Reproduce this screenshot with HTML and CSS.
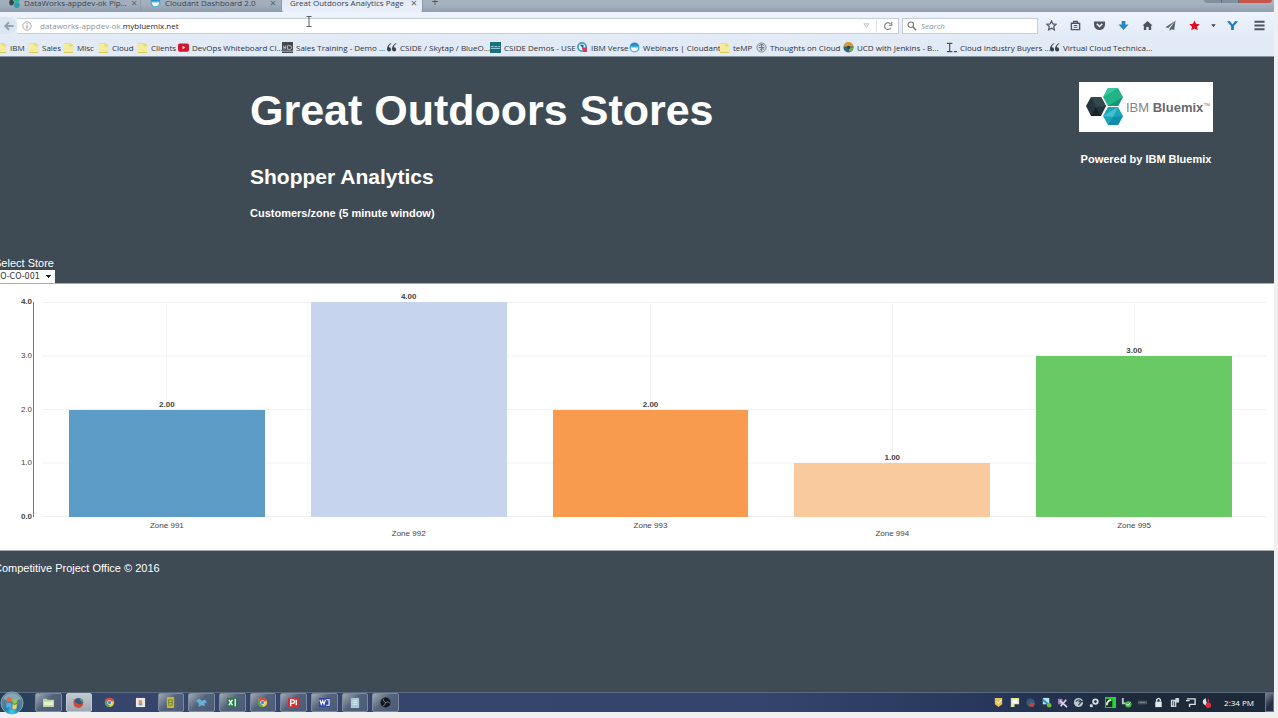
FILE: index.html
```html
<!DOCTYPE html>
<html lang="en">
<head>
<meta charset="utf-8">
<title>Great Outdoors Analytics Page</title>
<link rel="stylesheet" href="styles.css">
</head>
<body>
<svg class="defs" aria-hidden="true">
  <symbol id="folder" viewBox="0 0 12 12"><path d="M1 1h7l3 2v9H1z" fill="#e9dc74"/><path d="M1 2h6v3h4v6H1z" fill="#f3ec9b"/><path d="M1 11.500h10" stroke="#d6c45c"/></symbol>
  <symbol id="quotes" viewBox="0 0 12 12"><path d="M5.500 1C2.500 2.500 1 5 1 8a2.300 2.300 0 1 0 2-2.300C3.300 4 4 2.800 5.800 1.800zM11 1C8 2.500 6.500 5 6.500 8a2.300 2.300 0 1 0 2-2.300c.3-1.700 1-2.900 2.800-3.900z" fill="#3b444d"/></symbol>
  <symbol id="cloudant" viewBox="0 0 12 12"><circle cx="6" cy="6" r="5.500" fill="#42b4dc"/><path d="M2 6h8a4 4 0 0 1-8 0z" fill="#fff"/><path d="M1 4a5.500 5.500 0 0 1 10 0z" fill="#2f86c4"/></symbol>
  <symbol id="chrome" viewBox="0 0 12 12"><circle cx="6" cy="6" r="5" fill="#e9c93f"/><path d="M6 6 1.500 3.800A5 5 0 0 1 10.700 4z" fill="#dd4a3c"/><path d="M6 6 1.500 3.800A5 5 0 0 0 6 11z" fill="#42a55a"/><circle cx="6" cy="6" r="2.400" fill="#fff"/><circle cx="6" cy="6" r="1.800" fill="#4a86d8"/></symbol>
</svg>
<div class="screen">
  <header class="browser">
    <div class="tabs">
      <div class="tab"><svg class="ico" viewBox="0 0 12 12"><path d="M7 0h4l1 3-2 3H7L5 3z" fill="#28b58a"/><path d="M7 6h4l1 3-2 3H7L5 9z" fill="#22a3b5"/><path d="M1 3h3l2 3-2 3H1L0 6z" fill="#34454c"/></svg><span class="tab-title">DataWorks-appdev-ok Pip...</span><button class="close" aria-label="Close tab">×</button></div>
      <div class="tab"><svg class="ico"><use href="#cloudant"/></svg><span class="tab-title">Cloudant Dashboard 2.0</span><button class="close" aria-label="Close tab">×</button></div>
      <div class="tab active"><span class="tab-title">Great Outdoors Analytics Page</span><button class="close" aria-label="Close tab">×</button></div>
      <button class="newtab" aria-label="New tab">+</button>
      <div class="winbtns"><button aria-label="Minimize"></button><button aria-label="Maximize"></button><button class="red" aria-label="Close"></button></div>
    </div>
    <div class="toolbar">
      <button class="back" aria-label="Back"><svg viewBox="0 0 16 16"><path d="M8 3 3 8l5 5M3.500 8H14" fill="none" stroke="#93a2b0" stroke-width="2.500"/></svg></button>
      <div class="url">
        <svg class="info" viewBox="0 0 12 12"><circle cx="6" cy="6" r="5" fill="none" stroke="#999"/><path d="M6 5v4M6 2.800v1.200" stroke="#888" stroke-width="1.200"/></svg>
        <a class="address" href="#">dataworks-appdev-ok.<b>mybluemix.net</b></a>
        <svg class="drop" viewBox="0 0 8 8"><path d="M1 2h6L4 6.500z" fill="#eee" stroke="#aaa" stroke-width=".7"/></svg>
        <button class="reload" aria-label="Reload"><svg viewBox="0 0 12 12"><path d="M9.500 8A4 4 0 1 1 9 3.500M10.500 1v4H7" fill="none" stroke="#777" stroke-width="1.300"/></svg></button>
      </div>
      <label class="search"><svg viewBox="0 0 12 12"><circle cx="4.500" cy="4.500" r="3.300" fill="none" stroke="#777" stroke-width="1.300"/><path d="m7 7 4 4" stroke="#777" stroke-width="1.800"/></svg><input type="text" placeholder="Search" aria-label="Search"></label>
      <div class="tools">
        <button aria-label="Bookmark"><svg viewBox="0 0 12 12"><path d="m6 1 1.500 3.300 3.600.4-2.700 2.400.8 3.600L6 8.900l-3.200 1.800.8-3.600L.9 4.700l3.600-.4z" fill="none" stroke="#4c5560" stroke-width="1.300"/></svg></button>
        <button aria-label="Bookmarks menu"><svg viewBox="0 0 12 12"><path d="M1.500 3.500h9v7h-9zM4 3V1.500h4V3" fill="none" stroke="#4c5560" stroke-width="1.500"/><path d="M4 6h4M4 8h4" stroke="#4c5560"/></svg></button>
        <button aria-label="Pocket"><svg viewBox="0 0 12 12"><path d="M0 1.500h12V5A6 6 0 0 1 0 5z" fill="#4c5560"/><path d="m3 4 3 3 3-3" fill="none" stroke="#fff" stroke-width="1.500"/></svg></button>
        <button aria-label="Downloads"><svg viewBox="0 0 12 12"><path d="M4 1h4v4h3.500L6 11 .5 5H4z" fill="#2487bd"/></svg></button>
        <button aria-label="Home"><svg viewBox="0 0 12 12"><path d="m6 1 5.500 5H10v5H7.300V7.500H4.700V11H2V6H.5z" fill="#4c5560"/></svg></button>
        <button aria-label="Send"><svg viewBox="0 0 12 12"><path d="M11.500.5.5 8l3 .8zM11.500.500 5 9.500V12l2-2 3 1z" fill="#59636d"/></svg></button>
        <button aria-label="Favorite"><svg viewBox="0 0 12 12"><path d="m6 .5 1.700 3.700 4 .4-3 2.700.9 4L6 9.300l-3.600 2 .9-4-3-2.700 4-.4z" fill="#e40b20"/></svg></button>
        <button class="thin" aria-label="More"><svg viewBox="0 0 12 12"><path d="M2 4h8L6 9z" fill="#3f4852"/></svg></button>
        <button aria-label="Add-on"><svg viewBox="0 0 12 12"><path d="M0 1.500 3 1l3 4 3-4 3 .5-4.500 5V11h-3V6.500z" fill="#2478ba"/></svg></button>
        <button class="menu" aria-label="Menu"><svg viewBox="0 0 12 12"><path d="M.5 2h11M.5 6h11M.5 10h11" stroke="#4c5560" stroke-width="2.200"/></svg></button>
      </div>
    </div>
    <nav class="bookmarks" aria-label="Bookmarks">
      <a href="#"><svg class="ico"><use href="#folder"/></svg>IBM</a>
      <a href="#"><svg class="ico"><use href="#folder"/></svg>Sales</a>
      <a href="#"><svg class="ico"><use href="#folder"/></svg>Misc</a>
      <a href="#"><svg class="ico"><use href="#folder"/></svg>Cloud</a>
      <a href="#"><svg class="ico"><use href="#folder"/></svg>Clients</a>
      <a href="#"><svg class="ico" viewBox="0 0 12 12"><rect y="1.500" width="12" height="9" rx="2" fill="#d5152b"/><path d="M5 4v4l3-2z" fill="#fff"/></svg>DevOps Whiteboard Cl...</a>
      <a href="#"><svg class="ico" viewBox="0 0 12 12"><rect width="12" height="12" fill="#47474f"/><path d="M2 4v4M4 4v4M2 6h2M6 4v4h2.500a2 2 0 0 0 0-4zM0 10h12" fill="none" stroke="#ccd" stroke-width=".9"/></svg>Sales Training - Demo ...</a>
      <a href="#"><svg class="ico"><use href="#quotes"/></svg>CSIDE / Skytap / BlueO...</a>
      <a href="#"><svg class="ico" viewBox="0 0 12 12"><rect width="12" height="12" fill="#1b6f7f"/><path d="M1 5h3M5 5h3M9 5h2M1 7h10" stroke="#a9dbe2"/></svg>CSIDE Demos - USE</a>
      <a href="#"><svg class="ico" viewBox="0 0 12 12"><circle cx="5.500" cy="5.500" r="4.500" fill="#dff" stroke="#3f9fc6" stroke-width="2"/><path d="M5 6h6v5H7z" fill="#d83a62"/><path d="M3 3h4v4z" fill="#37479c"/></svg>IBM Verse</a>
      <a href="#"><svg class="ico"><use href="#cloudant"/></svg>Webinars | Cloudant</a>
      <a href="#"><svg class="ico"><use href="#folder"/></svg>teMP</a>
      <a href="#"><svg class="ico" viewBox="0 0 12 12"><circle cx="6" cy="6" r="5" fill="#d8dee3" stroke="#808a92"/><path d="M3 4q3-3 6 0M3 6h6M6 2v8M4 9q3-3 5-1" fill="none" stroke="#68727a"/></svg>Thoughts on Cloud</a>
      <a href="#"><svg class="ico" viewBox="0 0 12 12"><circle cx="6" cy="6" r="5.500" fill="#2e6b78"/><path d="M1 5a5 5 0 0 1 10 0z" fill="#d79b32"/><path d="M6 6h5a5 5 0 0 1-4 5z" fill="#6fb04b"/><circle cx="6" cy="6" r="1.800" fill="#314050"/></svg>UCD with Jenkins - B...</a>
      <a href="#"><svg class="ico" viewBox="0 0 12 12"><path d="M1 1.500h6M4 1v10M1 10.500h6M8.500 10.500H12" stroke="#4b545d" stroke-width="1.300"/></svg>Cloud Industry Buyers ...</a>
      <a href="#"><svg class="ico"><use href="#quotes"/></svg>Virtual Cloud Technica...</a>
    </nav>
  </header>
  <svg class="caret" viewBox="0 0 8 12" aria-hidden="true"><path d="M1.500 1H6.500M4 1v10M1.500 11H6.500" stroke="#59616a" fill="none"/></svg>

  <main class="page">
    <div class="hero">
      <div class="titles">
        <h1>Great Outdoors Stores</h1>
        <h2>Shopper Analytics</h2>
        <h3>Customers/zone (5 minute window)</h3>
      </div>
      <div class="brand">
        <svg class="logo" viewBox="0 0 134 50" role="img" aria-label="IBM Bluemix">
          <rect width="134" height="50" fill="#fff"/>
          <path d="M29 6h10l5 9-5 9H29l-5-9z" fill="#22b488"/><path d="m24 15 5-9h10z" fill="#3cc79a"/><path d="m29 24 15-9-5 9z" fill="#129873"/>
          <path d="M29 25h10l5 9-5 9H29l-5-9z" fill="#1ba6b8"/><path d="m24 34 15-9-5 10z" fill="#46bfd0"/><path d="m29 43 5-8 10-1-5 9z" fill="#118da9"/>
          <path d="M12 15h10l5 9-5 10H12l-5-10z" fill="#26353d"/><path d="m12 15 5 10 10-1-5-9z" fill="#35474f"/><path d="m12 34 5-9 5 9z" fill="#182329"/>
          <text class="logo-text" x="47" y="30">IBM <tspan class="logo-bold">Bluemix</tspan><tspan class="logo-tm" dy="-4">™</tspan></text>
        </svg>
        <p>Powered by IBM Bluemix</p>
      </div>
    </div>
    <div class="picker">
      <label for="store">Select Store</label>
      <select id="store"><option>GO-CO-001</option></select>
    </div>
    <section class="chart" aria-label="Customers per zone">
      <div class="axis"><b>4.0</b><span>3.0</span><span>2.0</span><span>1.0</span><b>0.0</b></div>
      <div class="plot">
        <div class="zone"><span class="value">2.00</span><div class="bar blue" style="height:50%"></div></div>
        <div class="zone"><span class="value">4.00</span><div class="bar lavender" style="height:100%"></div></div>
        <div class="zone"><span class="value">2.00</span><div class="bar orange" style="height:50%"></div></div>
        <div class="zone"><span class="value">1.00</span><div class="bar peach" style="height:25%"></div></div>
        <div class="zone"><span class="value">3.00</span><div class="bar green" style="height:75%"></div></div>
      </div>
      <div class="names"><span>Zone 991</span><span>Zone 992</span><span>Zone 993</span><span>Zone 994</span><span>Zone 995</span></div>
    </section>
    <footer>Competitive Project Office © 2016</footer>
  </main>

  <div class="taskbar">
    <button class="orb" aria-label="Start"><svg viewBox="0 0 24 24"><defs><radialGradient id="orbfill" cy=".9"><stop offset="0" stop-color="#35d5f5"/><stop offset=".6" stop-color="#2878a8"/><stop offset="1" stop-color="#557f98"/></radialGradient></defs><circle cx="12" cy="12" r="11" fill="url(#orbfill)" stroke="#8aa5b4"/><path d="M3 8a10 10 0 0 1 18 0q-9 4-18 0z" fill="#a6bfca" opacity=".6"/><path d="M7 7q2-1.500 4.500 0v4.500Q9 10 6.500 11.500z" fill="#e5673c"/><path d="M12.500 7.500Q15 9 17.500 7.500L17 12q-2.500 1.300-4.500 0z" fill="#8fc74c"/><path d="M6.500 12.500q2.500-1.500 5 0V17Q9 15.500 6 17z" fill="#55aee5"/><path d="M12.500 13Q15 14.500 17 13l-.5 4.500q-2 1.300-4 0z" fill="#f7d450"/></svg></button>
    <div class="apps">
      <button class="app" aria-label="Explorer"><svg viewBox="0 0 12 12"><path d="M0 2h4l1 1h7v8H0z" fill="#b9d7a1"/><path d="M1 5h10v4H1z" fill="#e8efcc"/></svg></button>
      <button class="app lit" aria-label="Firefox"><svg viewBox="0 0 12 12"><circle cx="6" cy="6" r="5" fill="#365b88"/><path d="M1 2q-2 9 5 10 6-1 5-8-1 5-5 4-4-1-5-6z" fill="#d84730"/><path d="M7 1q4 1 4 5L8 4z" fill="#48a36f"/></svg></button>
      <button class="app bare" aria-label="Chrome"><svg><use href="#chrome"/></svg></button>
      <button class="app bare" aria-label="Paint"><svg viewBox="0 0 12 12"><rect x="1" y="1" width="10" height="10" fill="#eee8e2"/><path d="m4 3 4 1-1 3-3 1z" fill="#dd9275"/><path d="M4 8h4" stroke="#7793bf" stroke-width="2"/></svg></button>
      <button class="app" aria-label="Notes"><svg viewBox="0 0 12 12"><rect x="2" width="8" height="12" rx="1" fill="#c3b83b"/><path d="M4 3h4v6H4zM4 6h4" fill="none" stroke="#77852c"/></svg></button>
      <button class="app" aria-label="Messenger"><svg viewBox="0 0 12 12"><path d="m0 4 4-2 2 2 4-1 2 3-3 1 1 3-4-1-3 2V7z" fill="#64b1d5"/></svg></button>
      <button class="app" aria-label="Excel"><svg viewBox="0 0 12 12"><path d="M0 1h12v10H0z" fill="#2d7852"/><path d="m2 3 4 6M6 3 2 9M9 2v8" stroke="#e7f4ec" stroke-width="1.500"/></svg></button>
      <button class="app" aria-label="Chrome window"><svg><use href="#chrome"/></svg></button>
      <button class="app" aria-label="PowerPoint"><svg viewBox="0 0 12 12"><rect y="1" width="12" height="10" rx="1" fill="#cb3137"/><path d="M3 10V3h2a2 2 0 0 1 0 4H3M9 3v6" fill="none" stroke="#fff" stroke-width="1.500"/></svg></button>
      <button class="app" aria-label="Word"><svg viewBox="0 0 12 12"><path d="M0 1h12v10H0z" fill="#3448a2"/><path d="m1 3 1.500 5L4 4l1.500 4L7 3M8 3h3v6H8" fill="none" stroke="#fff" stroke-width="1.200"/></svg></button>
      <button class="app" aria-label="Notepad"><svg viewBox="0 0 12 12"><path d="M2 1h9v11H2z" fill="#a9c8d6"/><path d="M4 4h5M4 6h5M4 8h5" stroke="#d8e8ef"/></svg></button>
      <button class="app" aria-label="Recorder"><svg viewBox="0 0 12 12"><circle cx="6" cy="6" r="5.500" fill="#12171b"/><path d="M6 6q-3-1-2-4M6 6q3-2 5 1M6 6q0 3-3 4" fill="none" stroke="#76818a"/></svg></button>
    </div>
    <div class="tray">
      <svg viewBox="0 0 12 12"><path d="M2 1h8v7l-4 3-4-3z" fill="#e6c557"/><path d="m4 5 2 2 3-4" fill="none" stroke="#fff"/></svg>
      <svg viewBox="0 0 12 12"><path d="M2 1h9v7H6v3H2z" fill="#dfe9a0"/><path d="M4 3h5v4H4z" fill="#fff"/></svg>
      <svg viewBox="0 0 12 12"><circle cx="6" cy="6" r="4.500" fill="#315d7a"/><path d="m6 6 5 1-2 4-5-1z" fill="#be4635"/></svg>
      <svg viewBox="0 0 12 12"><path d="M2 1h7v7H2z" fill="#b8e2f0"/><path d="m2 3 6 5" stroke="#248cc0" stroke-width="2"/><circle cx="9" cy="9" r="2.500" fill="#70bd36"/></svg>
      <svg viewBox="0 0 12 12"><path d="M1 2h5v6H1z" fill="#9d7bb4"/><path d="m3 4 8 7M10 3l-6 7" stroke="#ded5e6" stroke-width="1.800"/></svg>
      <svg viewBox="0 0 12 12"><circle cx="6" cy="6" r="5" fill="#bbc8ce"/><path d="M3 5q4-4 6 0L6 9M6 5h5" fill="none" stroke="#334050" stroke-width="1.300"/></svg>
      <svg viewBox="0 0 12 12"><circle cx="7" cy="5" r="2.500" fill="none" stroke="#d4dce2" stroke-width="2"/><path d="M1 8h3v3H1z" fill="#d4dce2"/></svg>
      <svg viewBox="0 0 12 12"><path d="M0 0h12v12H0z" fill="#27d532"/><path d="M1 2h7v9H1z" fill="#15331f"/><path d="M2 9q0-5 5-6" fill="none" stroke="#d6ead8" stroke-width="2"/></svg>
      <svg viewBox="0 0 12 12"><path d="M2 1v6h4" fill="none" stroke="#bbc8ce" stroke-width="2"/><circle cx="8" cy="8" r="3.500" fill="#43b94a"/><path d="m6 8 2 1 2-3" fill="none" stroke="#fff"/></svg>
      <svg viewBox="0 0 12 12"><path d="M1 4h10v4H1z" fill="#4b565f"/><path d="M3 6h6" stroke="#7a858d"/></svg>
      <svg viewBox="0 0 12 12"><path d="M2.500 5h7v6h-7z" fill="#e4e9ed"/><path d="M4 5V3q2-3 4 0v2" fill="none" stroke="#e4e9ed" stroke-width="1.500"/></svg>
      <svg viewBox="0 0 12 12"><path d="M2 3h6v8H2zM7 1h4v5H7z" fill="#cfd7dd"/><path d="M4 4v5M6 5v5" stroke="#45505b"/></svg>
      <svg viewBox="0 0 12 12"><path d="M2 2h9v6H5v3M1 4h4" fill="none" stroke="#dce3e8" stroke-width="1.500"/></svg>
      <svg viewBox="0 0 12 12"><path d="M5 1Q0 4 3 8l5 3 3-3-5-2z" fill="#e1e4e8"/><circle cx="8" cy="9" r="3" fill="#d92e40"/><path d="M8 2v4" stroke="#d92e40" stroke-width="1.500"/></svg>
    </div>
    <time>2:34 PM</time>
    <button class="desktop" aria-label="Show desktop"></button>
  </div>
</div>
</body>
</html>
```
FILE: styles.css
```css
* { box-sizing: border-box; }
body { margin: 0; background: #f0f0f0; font-family: "Liberation Sans", Arial, sans-serif; }
button, input, select { margin: 0; padding: 0; border: 0; background: none; font: inherit; color: inherit; }
a { color: inherit; text-decoration: none; }
svg { display: block; flex: none; }
.defs { position: absolute; width: 0; height: 0; }

.screen { position: relative; display: flex; flex-direction: column; min-height: 100vh; padding: 0 4px 6px 0; overflow: hidden; }

/* Browser window */
.browser { font-family: "Open Sans", "Noto Sans", sans-serif; font-size: 8px; color: #3a424b; background: #e2eaf6; border-bottom: 1px solid #8795a1; overflow: hidden; }
.ico { width: 11px; height: 11px; }
.tabs { display: flex; height: 20px; margin-top: -8px; background: linear-gradient(#a5b2bf 60%, #92a0af); }
.tab { display: flex; align-items: center; gap: 4px; width: 141px; padding: 0 5px 0 9px; background: linear-gradient(#a3afbd 60%, #8e9cab); border-right: 1px solid #8c99a7; }
.tab.active { background: linear-gradient(#dbe4ef, #eaf1fc); padding-left: 8px; border-radius: 0 0 2px 2px; }
.tab-title { flex: 1; white-space: nowrap; }
.close { font-size: 11px; line-height: 11px; color: #59636e; }
.newtab { width: 24px; font-size: 12px; line-height: 20px; color: #4c5661; }
.winbtns { display: flex; width: 68px; height: 11px; margin: 0 2px 0 auto; border-radius: 0 0 3px 3px; overflow: hidden; }
.winbtns button { flex: 1; background: #8390a0; border-right: 1px solid #606d7b; }
.winbtns .red { flex: 2; background: #c45549; border: 0; }
.toolbar { display: flex; align-items: center; height: 27px; background: linear-gradient(#eef4fe, #e1eaf6); }
.back { width: 17px; height: 17px; padding: 3px; border-radius: 0 9px 9px 0; background: #dce6f1; }
.back svg { width: 12px; height: 12px; }
.url { display: flex; align-items: center; flex: 1; height: 16px; padding-left: 5px; background: #fff; border: 1px solid #c5ced8; border-left: 0; }
.info { width: 10px; height: 10px; }
.address { flex: 1; margin-left: 8px; color: #8e959b; }
.address b { font-weight: normal; color: #22282e; }
.drop { width: 7px; height: 7px; margin-right: 6px; }
.reload { width: 22px; height: 12px; padding-left: 6px; border-left: 1px solid #d9dfe5; }
.reload svg { width: 10px; height: 10px; }
.search { display: flex; align-items: center; gap: 4px; width: 136px; height: 16px; margin-left: 3px; padding-left: 4px; background: #fff; border: 1px solid #c5ced8; }
.search svg { width: 10px; height: 10px; }
.search input { flex: 1; min-width: 0; outline: 0; }
.search input::placeholder { color: #8a9096; font-style: italic; opacity: 1; }
.tools { display: flex; align-items: center; width: 236px; padding-left: 2px; }
.tools button { display: grid; place-items: center; flex: 24; }
.tools svg { width: 11px; height: 11px; }
.tools .thin { flex: 14; }
.tools .thin svg { width: 7px; height: 7px; }
.tools .menu { flex: 30; }
.bookmarks { display: grid; grid-template-columns: 32px 35px 35px 39px 41px 104px 104px 104px 87px 52px 90px 37px 87px 103px 103px 110px; height: 17px; margin-left: -4px; align-items: center; }
.bookmarks a { display: flex; align-items: center; gap: 3px; white-space: nowrap; color: #2c343c; }
.caret { position: absolute; left: 305px; top: 15px; width: 8px; height: 13px; }

/* Analytics page */
.page { flex: 1; background: #3f4b54; color: #fff; }
.hero { display: flex; justify-content: space-between; height: 199px; padding: 25px 61px 0 250px; }
h1, h2, h3, p { margin: 0; font-weight: bold; }
h1 { font-size: 43px; line-height: 56px; }
h2 { margin-top: 26px; font-size: 21px; line-height: 26px; }
h3 { margin-top: 16px; font-size: 11px; line-height: 14px; }
.brand { width: 134px; text-align: center; }
.brand p { margin-top: 20px; font-size: 11px; line-height: 14px; white-space: nowrap; }
.logo { width: 134px; height: 50px; }
.logo-text { font-size: 13px; fill: #858585; }
.logo-bold { font-weight: bold; fill: #6a6a6a; }
.logo-tm { font-size: 7px; }
.picker { display: flex; flex-direction: column; align-items: flex-start; margin-left: -6px; font-size: 11px; line-height: 14px; }
.picker select { height: 13px; width: 61px; appearance: none; font: 8px/13px "DejaVu Sans", sans-serif; color: #333; background: conic-gradient(from 315deg at 50% 100%, #222 90deg, #fff 0) right 4px center / 5px 3px no-repeat, #fff; }
.chart { display: grid; grid-template-columns: 42px 1fr; padding: 18px 7px 0 0; background: #fff; border-top: 1px solid #a7adb2; border-bottom: 1px solid #a7adb2; color: #444; font-size: 8px; }
.axis { display: flex; flex-direction: column; justify-content: space-between; height: 215px; width: 34px; border-right: 1px solid #777; padding-right: 1px; text-align: right; }
.axis > * { height: 0; line-height: 0; }
.plot { display: flex; height: 215px; padding: 0 12px 0 4px; background: linear-gradient(#f1f1f1 1px, transparent 1px) 0 0 / 100% 25%; border-bottom: 1px solid #eee; }
.zone { display: flex; flex: 1; flex-direction: column; align-items: center; justify-content: flex-end; height: 215px; background: linear-gradient(#f4f4f4, #f4f4f4) center / 1px 100% no-repeat; }
.value { font-weight: bold; line-height: 11px; }
.bar { flex: none; width: 81%; }
.blue { background: #5c9cc6; }
.lavender { background: #c6d4ee; }
.orange { background: #f89b4e; }
.peach { background: #f9ca9d; }
.green { background: #69c965; }
.names { grid-column: 2; display: flex; height: 33px; padding: 3px 12px 0 4px; line-height: 12px; }
.names span { flex: 1; text-align: center; }
.names span:nth-child(even) { padding-top: 8px; }
footer { margin-left: -6px; padding-top: 10px; font-size: 11px; line-height: 14px; }

/* Taskbar */
.taskbar { display: flex; align-items: center; height: 20px; background: linear-gradient(to right, #263e54, #35456b 8%, #35446c 60%, #27365a 78%, #1d2938 90%); border-top: 1px solid #5c6c80; color: #fff; }
.orb { width: 24px; height: 24px; margin: -2px 9px -2px 0; }
.orb svg { width: 24px; height: 24px; }
.apps { display: grid; grid-template-columns: repeat(12, 1fr); width: 368px; height: 19px; }
.app { display: grid; place-items: center; margin: 0 2px; border: 1px solid #7d8a9d; border-radius: 2px; background: linear-gradient(135deg, #a1abb4, #54637b 45%, #4b5b78); }
.app svg { width: 11px; height: 11px; }
.app.lit { background: linear-gradient(#c2c9cf, #9ea8b2); border-color: #c0c8cf; }
.app.bare { background: none; border-color: transparent; }
.tray { display: flex; gap: 5px; margin-left: auto; }
.tray svg { width: 11px; height: 11px; }
time { margin: 0 11px 0 12px; font: 8px/12px "Open Sans", sans-serif; }
.desktop { width: 9px; height: 19px; border: 1px solid #65758a; background: linear-gradient(135deg, #748190, #242f45 60%); }
```
